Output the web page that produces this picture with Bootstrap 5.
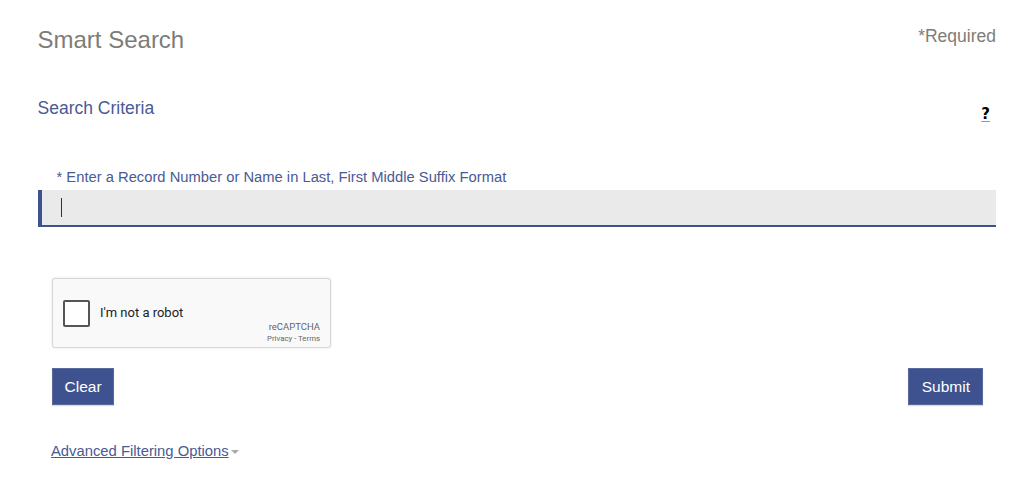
<!DOCTYPE html>
<html lang="en">
<head>
<meta charset="utf-8">
<title>Smart Search</title>
<link href="https://cdn.jsdelivr.net/npm/bootstrap@5.3.0/dist/css/bootstrap.min.css" rel="stylesheet">
<style>
html,body{height:503px;overflow:hidden}
body{font-family:"Liberation Sans",Arial,sans-serif;background:#fff;color:#7a7a78}
.shell{padding:25px 28px 0 38px}
.page-title{font-size:24px;line-height:29px;font-weight:400;color:#7d7d78;margin:0 0 0 -.5px}
.req-note{font-size:17.5px;line-height:21px;color:#7d7d78;margin-top:1px}
.crit-row{margin-top:43px;height:71px}
.crit-title{font-size:17.5px;line-height:22px;font-weight:400;color:#4a5a95;margin:0 0 0 -.5px}
.help-mark{font-family:"DejaVu Sans",sans-serif;font-size:15px;line-height:18px;font-weight:700;color:#000;text-decoration:underline;text-decoration-color:#999;text-underline-offset:2px;margin:8px 6px 0 0}
.field-label{font-size:14.75px;line-height:18px;color:#4a5a95;margin:0 0 4px 18.5px;display:block}
.field-wrap{position:relative}
.field-input{display:block;width:100%;height:37px;background:#eaeaea;border:0;border-left:4px solid #3f5290;border-bottom:2px solid #3f5290;border-radius:0;padding:0 0 0 18px;color:#333;box-shadow:none;outline:0}
.field-caret{position:absolute;left:23px;top:8px;width:1px;height:19px;background:#333}
.lower{padding:0 13px}
.captcha-box{width:279px;height:70px;margin:51px 0 0 1px;background:#f9f9f9;border:1px solid #d6d6d6;border-radius:3px;box-shadow:0 0 3px rgba(0,0,0,.1);font-family:Roboto,sans-serif;padding:0 10px}
.captcha-check{width:27px;height:27px;background:#fff;border:2px solid #555;border-radius:2px}
.captcha-text{font-size:13px;color:#222;margin-left:10px}
.captcha-brand{font-size:9.5px;line-height:11px;color:#666;text-align:right;margin-top:42px}
.captcha-links{font-size:7.8px;line-height:11px;color:#666;text-align:right;margin-top:1px}
.act-row{margin-top:20px}
.act-btn{background:#3f5290;border:1px solid #5a6a9e;border-radius:0;color:#fff;font-size:15.5px;line-height:19px;padding:8px 11.5px;box-shadow:0 1px 1px rgba(0,0,0,.15)}
.clear-btn{margin-left:1px}
.submit-btn{padding-left:12.5px;padding-right:12px}
.adv-row{margin-top:34px}
.adv-link{font-size:14.8px;line-height:18px;color:#4a5a95;text-decoration:underline}
.adv-caret{display:inline-block;width:0;height:0;border-left:4px solid transparent;border-right:4px solid transparent;border-top:4px solid #aaa;vertical-align:middle;margin-left:2px}
</style>
</head>
<body>
<div class="shell">
  <div class="d-flex justify-content-between align-items-start">
    <h1 class="page-title">Smart Search</h1>
    <div class="req-note">*Required</div>
  </div>
  <div class="crit-row d-flex justify-content-between align-items-start">
    <h2 class="crit-title">Search Criteria</h2>
    <a class="help-mark" href="#">?</a>
  </div>
  <label class="field-label" for="q">* Enter a Record Number or Name in Last, First Middle Suffix Format</label>
  <div class="field-wrap">
    <input id="q" class="field-input" type="text">
    <span class="field-caret"></span>
  </div>
  <div class="lower">
    <div class="captcha-box d-flex justify-content-between">
      <div class="d-flex align-items-center">
        <span class="captcha-check"></span>
        <span class="captcha-text">I'm not a robot</span>
      </div>
      <div>
        <div class="captcha-brand">reCAPTCHA</div>
        <div class="captcha-links">Privacy - Terms</div>
      </div>
    </div>
    <div class="act-row d-flex justify-content-between">
      <button class="btn act-btn clear-btn" type="button">Clear</button>
      <button class="btn act-btn submit-btn" type="button">Submit</button>
    </div>
    <div class="adv-row"><a class="adv-link" href="#">Advanced Filtering Options</a><span class="adv-caret"></span></div>
  </div>
</div>
<script src="https://cdn.jsdelivr.net/npm/bootstrap@5.3.0/dist/js/bootstrap.bundle.min.js"></script>
</body>
</html>
